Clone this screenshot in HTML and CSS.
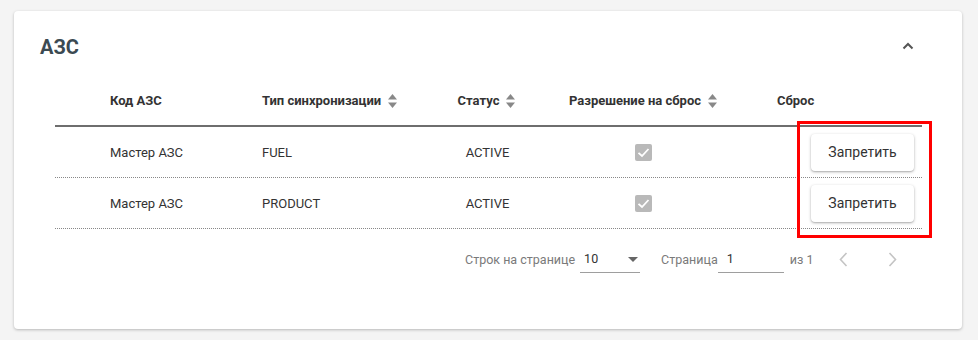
FILE: index.html
```html
<!DOCTYPE html>
<html lang="ru">
<head>
    <meta charset="UTF-8">
    <title>АЗС</title>
    <link rel="stylesheet" href="styles.css">
</head>
<body>
    <div class="card">
        <div class="card-header">
            <h2>АЗС</h2>
            <button class="collapse">
                <svg width="12" height="8" viewBox="0 0 12 8"><polyline points="1.5,6.5 6,2 10.5,6.5" fill="none" stroke="#555" stroke-width="2"/></svg>
            </button>
        </div>

        <div class="table">
            <div class="row head">
                <div class="cell c1">Код АЗС</div>
                <div class="cell c2">Тип синхронизации <span class="sort"><svg width="9" height="14" viewBox="0 0 9 14"><polygon points="4.5,0 9,5.5 0,5.5" fill="#888"/><polygon points="0,8.5 9,8.5 4.5,14" fill="#888"/></svg></span></div>
                <div class="cell c3">Статус <span class="sort"><svg width="9" height="14" viewBox="0 0 9 14"><polygon points="4.5,0 9,5.5 0,5.5" fill="#888"/><polygon points="0,8.5 9,8.5 4.5,14" fill="#888"/></svg></span></div>
                <div class="cell c4">Разрешение на сброс <span class="sort"><svg width="9" height="14" viewBox="0 0 9 14"><polygon points="4.5,0 9,5.5 0,5.5" fill="#888"/><polygon points="0,8.5 9,8.5 4.5,14" fill="#888"/></svg></span></div>
                <div class="cell c5">Сброс</div>
            </div>

            <div class="row">
                <div class="cell c1">Мастер АЗС</div>
                <div class="cell c2">FUEL</div>
                <div class="cell c3">ACTIVE</div>
                <div class="cell c4"><svg width="17" height="17" viewBox="0 0 17 17"><rect width="17" height="17" rx="2" fill="#b9b9b9"/><polyline points="3.5,8.8 7,12 13.5,5" fill="none" stroke="#fff" stroke-width="1.8"/></svg></div>
                <div class="cell c5"><button class="deny">Запретить</button></div>
            </div>
            <div class="row">
                <div class="cell c1">Мастер АЗС</div>
                <div class="cell c2">PRODUCT</div>
                <div class="cell c3">ACTIVE</div>
                <div class="cell c4"><svg width="17" height="17" viewBox="0 0 17 17"><rect width="17" height="17" rx="2" fill="#b9b9b9"/><polyline points="3.5,8.8 7,12 13.5,5" fill="none" stroke="#fff" stroke-width="1.8"/></svg></div>
                <div class="cell c5"><button class="deny">Запретить</button></div>
            </div>

            <!-- выделение колонки -->
            <div class="highlight"></div>

            <div class="pagination">
                <span class="pg-label">Строк на странице</span>
                <div class="pg-select">10 <span class="caret"></span></div>
                <span class="pg-label page">Страница</span>
                <div class="pg-input">1</div>
                <span class="pg-label of">из 1</span>
                <button class="pg-btn prev"><svg width="9" height="15" viewBox="0 0 9 15"><polyline points="7.5,1 1.5,7.5 7.5,14" fill="none" stroke="#c4c4c4" stroke-width="1.6"/></svg></button>
                <button class="pg-btn next"><svg width="9" height="15" viewBox="0 0 9 15"><polyline points="1.5,1 7.5,7.5 1.5,14" fill="none" stroke="#c4c4c4" stroke-width="1.6"/></svg></button>
            </div>
        </div>
    </div>
</body>
</html>
```

FILE: styles.css
```css
body {
    font-family: Roboto, 'Liberation Sans', sans-serif;
    background-color: #f4f4f4;
    color: #333;
    margin: 0;
    padding: 11px 16px 11px 14px;
}
.card {
    width: 948px;
    height: 318px;
    box-sizing: border-box;
    background: white;
    border-radius: 4px;
    box-shadow: 0 1px 3px rgba(0,0,0,0.25);
    padding: 24px 40px 0 26px;
}
.card-header {
    display: flex;
    justify-content: space-between;
    align-items: center;
    height: 24px;
    margin-bottom: 22px;
}
.card-header h2 {
    margin: 0;
    font-size: 20px;
    line-height: 24px;
    font-weight: bold;
    color: #3c4a52;
}
.collapse {
    background: none;
    border: none;
    width: 28px;
    height: 24px;
    padding: 0;
    margin-top: -4px;
    cursor: pointer;
}
.table {
    position: relative;
    width: 867px;
    margin-left: 15px;
}
.row {
    display: grid;
    grid-template-columns: 195px 180px 115px 196px 181px;
    height: 50px;
    border-bottom: 1px dotted #888;
    font-size: 13px;
}
.row.head {
    height: 44px;
    border-bottom: 2px solid #6e6e6e;
    font-weight: bold;
}
.cell {
    display: flex;
    align-items: center;
}
.head .cell {
    align-items: flex-start;
    padding-top: 12px;
    line-height: 16px;
    box-sizing: border-box;
}
.sort {
    display: inline-flex;
    margin-left: 7px;
    margin-top: 1px;
}
.c1 {
    padding-left: 55px;
}
.c2 {
    padding-left: 12px;
}
.c3, .c4 {
    justify-content: center;
}
.head .c3 {
    justify-content: center;
    padding-right: 2px;
}
.c5 {
    justify-content: flex-end;
    padding-right: 8px;
}
.head .c5 {
    justify-content: flex-start;
    padding-left: 36px;
}
.deny {
    width: 103px;
    height: 37px;
    background: white;
    border: none;
    border-radius: 4px;
    box-shadow: 0 1px 3px rgba(0,0,0,0.3), 0 1px 1px rgba(0,0,0,0.08);
    font-family: Roboto, 'Liberation Sans', sans-serif;
    font-size: 14px;
    color: #333;
    cursor: pointer;
}
.highlight {
    position: absolute;
    left: 742px;
    top: 40px;
    width: 129px;
    height: 111px;
    border: 3px solid #f00;
}
.pagination {
    display: flex;
    align-items: center;
    height: 36px;
    margin-top: 12px;
    padding-left: 410px;
    font-size: 12.5px;
}
.pg-label {
    color: #7a7a7a;
}
.pg-select {
    position: relative;
    width: 56px;
    margin-left: 5px;
    padding-left: 4px;
    height: 26px;
    line-height: 26px;
    border-bottom: 1px solid #9e9e9e;
    color: #333;
}
.caret {
    position: absolute;
    right: 2px;
    top: 11px;
    border-left: 5px solid transparent;
    border-right: 5px solid transparent;
    border-top: 5px solid #666;
}
.pg-label.page {
    margin-left: 21px;
}
.pg-input {
    width: 57px;
    margin-left: 0;
    padding-left: 9px;
    height: 26px;
    line-height: 26px;
    border-bottom: 1px solid #9e9e9e;
    color: #333;
}
.pg-label.of {
    margin-left: 6px;
}
.pg-btn {
    background: none;
    border: none;
    width: 32px;
    height: 32px;
    padding: 0;
    display: flex;
    align-items: center;
    justify-content: center;
}
.pg-btn.prev {
    margin-left: 14px;
}
.pg-btn.next {
    margin-left: 17px;
}
```
